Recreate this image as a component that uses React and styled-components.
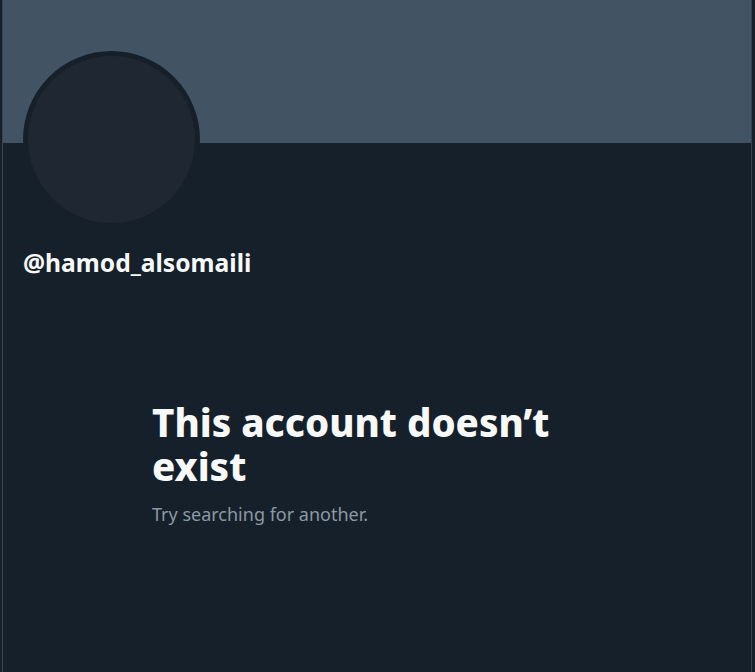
import React from "react";
import styled, { createGlobalStyle } from "styled-components";

const GlobalStyle = createGlobalStyle`
  html, body {
    margin: 0;
    padding: 0;
    background: #15202b;
    height: 100%;
  }
  #root {
    height: 100%;
  }
`;

const Page = styled.div`
  height: 672px;
  display: flex;
  justify-content: flex-start;
  padding-left: 2px;
  background: #15202b;
  font-family: "Noto Sans", "Open Sans", sans-serif;
  overflow: hidden;
`;

const Column = styled.main`
  width: 748px;
  border-left: 1px solid #38444d;
  border-right: 1px solid #38444d;
  background: #16202a;
  display: flex;
  flex-direction: column;
`;

const Banner = styled.div`
  height: 143px;
  background: #425364;
`;

const ProfileHead = styled.div`
  padding: 0 20px;
  display: flex;
  flex-direction: column;
`;

const Avatar = styled.div`
  width: 167px;
  height: 167px;
  margin-top: -92px;
  border-radius: 50%;
  border: 5px solid #16202a;
  background: #1f2732;
`;

const Handle = styled.div`
  margin-top: 20px;
  color: #f7f9f9;
  font-size: 24.6px;
  font-weight: 700;
  line-height: 30px;
`;

const Empty = styled.section`
  width: 450px;
  margin: 122px auto 0;
  display: flex;
  flex-direction: column;
`;

const Title = styled.h2`
  margin: 0;
  color: #f7f9f9;
  font-size: 38.4px;
  font-weight: 800;
  line-height: 44px;
`;

const Subtitle = styled.p`
  margin: 14px 0 0;
  color: #8b98a5;
  font-size: 18px;
  line-height: 24px;
`;

export default function App() {
  return (
    <>
      <GlobalStyle />
      <Page>
        <Column>
          <Banner />
          <ProfileHead>
            <Avatar />
            <Handle>@hamod_alsomaili</Handle>
          </ProfileHead>
          <Empty>
            <Title>This account doesn’t exist</Title>
            <Subtitle>Try searching for another.</Subtitle>
          </Empty>
        </Column>
      </Page>
    </>
  );
}
